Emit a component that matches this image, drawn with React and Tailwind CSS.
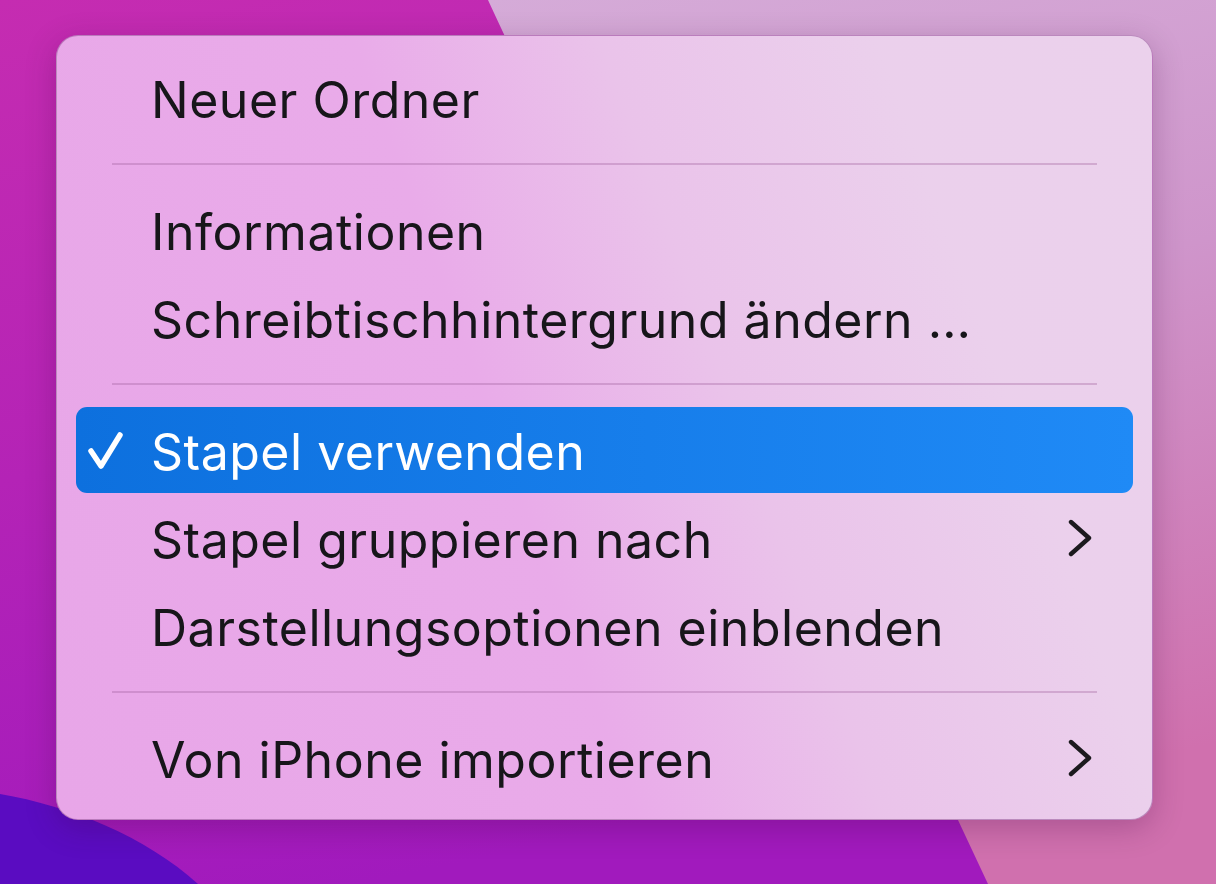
import React from "react";

const Check = () => (
  <svg width="36" height="40" viewBox="0 0 36 40" className="shrink-0">
    <path d="M3 21 L13 36 L32 5" fill="none" stroke="white" strokeWidth="5.5" strokeLinecap="round" strokeLinejoin="round" />
  </svg>
);

const Chevron = () => (
  <svg width="24" height="38" viewBox="0 0 24 38" className="shrink-0">
    <path d="M3 3 L21 19 L3 35" fill="none" stroke="#1c1a1e" strokeWidth="4.4" strokeLinecap="round" strokeLinejoin="round" />
  </svg>
);

function Row({ label, checked = false, active = false, submenu = false }) {
  return (
    <div className="h-[88px] py-[1px]">
      <div
        className={
          active
            ? "h-[86px] flex items-center rounded-[11px] bg-gradient-to-r from-[#0d70de] to-[#1f8af6] pl-[12px] pr-[41px] text-white"
            : "h-[86px] flex items-center rounded-[11px] pl-[12px] pr-[41px] text-[#17161a]"
        }
      >
        <div className="w-[63px] shrink-0 flex items-center">{checked ? <Check /> : null}</div>
        <div className="flex-1 pt-[4px] text-[50px] leading-none tracking-[0.5px] whitespace-nowrap">{label}</div>
        {submenu ? <Chevron /> : null}
      </div>
    </div>
  );
}

const Sep = () => (
  <div className="h-[44px] flex items-center px-[36px]">
    <div className="h-[2px] w-full bg-[#a0609f]/35" />
  </div>
);

export default function App() {
  return (
    <div
      className="relative w-[1216px] h-[884px] overflow-hidden"
      style={{ fontFamily: 'Inter, "Noto Sans", sans-serif' }}
    >
      <svg className="absolute inset-0" width="1216" height="884" viewBox="0 0 1216 884">
        <defs>
          <linearGradient id="bgL" x1="0" y1="0" x2="0.3" y2="1">
            <stop offset="0" stopColor="#c52cb1" />
            <stop offset="0.5" stopColor="#b423b6" />
            <stop offset="1" stopColor="#a11abd" />
          </linearGradient>
          <linearGradient id="bgR" x1="0" y1="0" x2="0.2" y2="1">
            <stop offset="0" stopColor="#d5abd8" />
            <stop offset="0.45" stopColor="#cf95cb" />
            <stop offset="1" stopColor="#d070ae" />
          </linearGradient>
        </defs>
        <rect width="1216" height="884" fill="url(#bgL)" />
        <path d="M488 0 C 570 180, 765 520, 958 820 L 988 884 L 1216 884 L 1216 0 Z" fill="url(#bgR)" />
        <path d="M0 794 C 70 806, 145 836, 198 884 L 0 884 Z" fill="#5a0cc1" />
      </svg>

      <div className="relative pt-[35px] pl-[56px]">
        <div className="w-[1097px] h-[785px] rounded-[22px] border border-[#9b5b9e]/60 shadow-[0_8px_30px_rgba(60,0,60,0.25)] bg-[linear-gradient(70deg,#e8a6e8_0%,#e9abe9_42%,#eac3ea_60%,#ebd0ec_80%,#ebd1ec_100%)] px-[19px] pt-[18px] pb-[17px]">
          <Row label="Neuer Ordner" />
          <Sep />
          <Row label="Informationen" />
          <Row label="Schreibtischhintergrund ändern …" />
          <Sep />
          <Row label="Stapel verwenden" checked active />
          <Row label="Stapel gruppieren nach" submenu />
          <Row label="Darstellungsoptionen einblenden" />
          <Sep />
          <Row label="Von iPhone importieren" submenu />
        </div>
      </div>
    </div>
  );
}
